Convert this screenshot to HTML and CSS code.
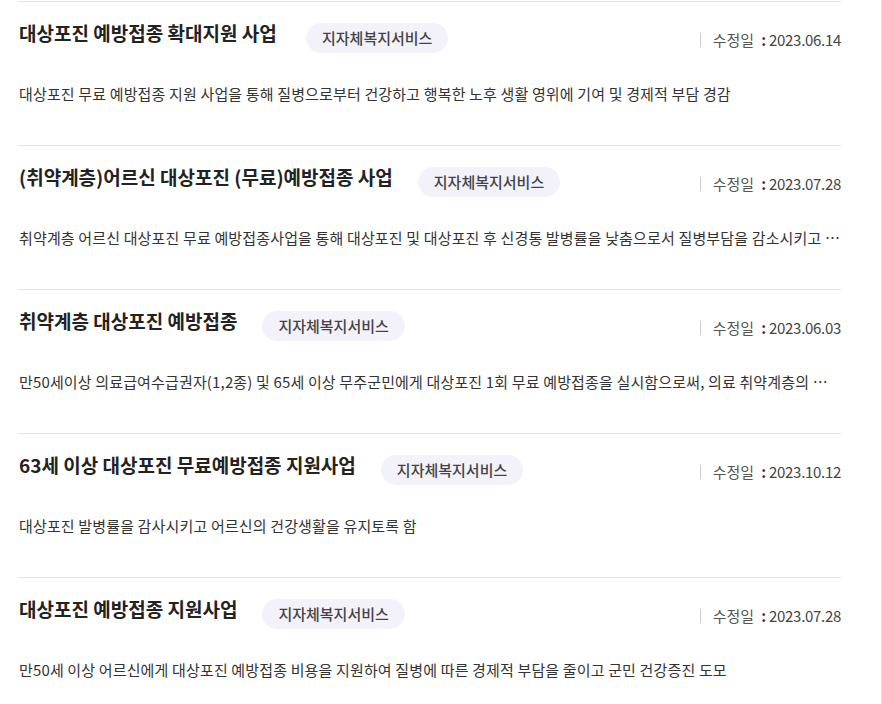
FILE: index.html
```html
<!DOCTYPE html>
<html>
<head>
    <meta name="viewport" content="width=device-width, initial-scale=1.0">
    <title>대상포진 예방접종 서비스 목록</title>
    <link rel="stylesheet" href="styles.css">
</head>
<body>
    <div class="page">
        <ul class="service-list">
            <li class="service-item">
                <div class="item-head">
                    <h3 class="item-title">대상포진 예방접종 확대지원 사업&nbsp;</h3>
                    <span class="badge">지자체복지서비스</span>
                    <div class="item-date"><span class="date-label">수정일</span><span class="date-colon">:</span><span class="date-value">2023.06.14</span></div>
                </div>
                <p class="item-desc">대상포진 무료 예방접종 지원 사업을 통해 질병으로부터 건강하고 행복한 노후 생활 영위에 기여 및 경제적 부담 경감</p>
            </li>
            <li class="service-item">
                <div class="item-head">
                    <h3 class="item-title">(취약계층)어르신 대상포진 (무료)예방접종 사업</h3>
                    <span class="badge">지자체복지서비스</span>
                    <div class="item-date"><span class="date-label">수정일</span><span class="date-colon">:</span><span class="date-value">2023.07.28</span></div>
                </div>
                <p class="item-desc">취약계층 어르신 대상포진 무료 예방접종사업을 통해 대상포진 및 대상포진 후 신경통 발병률을 낮춤으로서 질병부담을 감소시키고 건강한 노후생활을 지원</p>
            </li>
            <li class="service-item">
                <div class="item-head">
                    <h3 class="item-title">취약계층 대상포진 예방접종</h3>
                    <span class="badge">지자체복지서비스</span>
                    <div class="item-date"><span class="date-label">수정일</span><span class="date-colon">:</span><span class="date-value">2023.06.03</span></div>
                </div>
                <p class="item-desc">만50세이상 의료급여수급권자(1,2종) 및 65세 이상 무주군민에게 대상포진 1회 무료 예방접종을 실시함으로써, 의료 취약계층의 건강증진 도모</p>
            </li>
            <li class="service-item">
                <div class="item-head">
                    <h3 class="item-title">63세 이상 대상포진 무료예방접종 지원사업</h3>
                    <span class="badge">지자체복지서비스</span>
                    <div class="item-date"><span class="date-label">수정일</span><span class="date-colon">:</span><span class="date-value">2023.10.12</span></div>
                </div>
                <p class="item-desc">대상포진 발병률을 감사시키고 어르신의 건강생활을 유지토록 함</p>
            </li>
            <li class="service-item">
                <div class="item-head">
                    <h3 class="item-title">대상포진 예방접종 지원사업</h3>
                    <span class="badge">지자체복지서비스</span>
                    <div class="item-date"><span class="date-label">수정일</span><span class="date-colon">:</span><span class="date-value">2023.07.28</span></div>
                </div>
                <p class="item-desc">만50세 이상 어르신에게 대상포진 예방접종 비용을 지원하여 질병에 따른 경제적 부담을 줄이고 군민 건강증진 도모</p>
            </li>
        </ul>
    </div>
</body>
</html>
```

FILE: styles.css
```css
* {
    box-sizing: border-box;
    margin: 0;
    padding: 0;
}

body {
    font-family: "Noto Sans CJK KR", "Noto Sans", sans-serif;
    background-color: #fff;
    color: #333;
}

.page {
    width: 882px;
    min-height: 704px;
    border-right: 1px solid #e2e2e2;
    padding: 1px 40px 0 19px;
}

.service-list {
    list-style: none;
}

.service-item {
    height: 144px;
    border-top: 1px solid #e4e4e4;
    padding-top: 19px;
}

.item-head {
    display: flex;
    align-items: flex-start;
}

.item-title {
    font-size: 19px;
    font-weight: 700;
    line-height: 24px;
    color: #222;
}

.badge {
    margin: 2px 0 0 25px;
    height: 30px;
    line-height: 30px;
    padding: 0 16px;
    border-radius: 15px;
    background-color: #f3f2fa;
    color: #444;
    font-size: 15px;
    font-weight: 500;
}

.item-date {
    margin: 9px 0 0 auto;
    display: flex;
    align-items: center;
    font-size: 15px;
    line-height: 20px;
    color: #555;
}

.item-date::before {
    content: "";
    width: 1px;
    height: 14px;
    background-color: #ccc;
    margin-right: 12px;
}

.date-colon {
    margin: 0 3px 0 7px;
    color: #333;
    font-weight: 700;
}

.date-value {
    color: #444;
    letter-spacing: -0.3px;
}

.item-desc {
    margin-top: 30px;
    font-size: 15px;
    line-height: 22px;
    letter-spacing: 0.15px;
    color: #333;
    white-space: nowrap;
    overflow: hidden;
    text-overflow: ellipsis;
}
```
